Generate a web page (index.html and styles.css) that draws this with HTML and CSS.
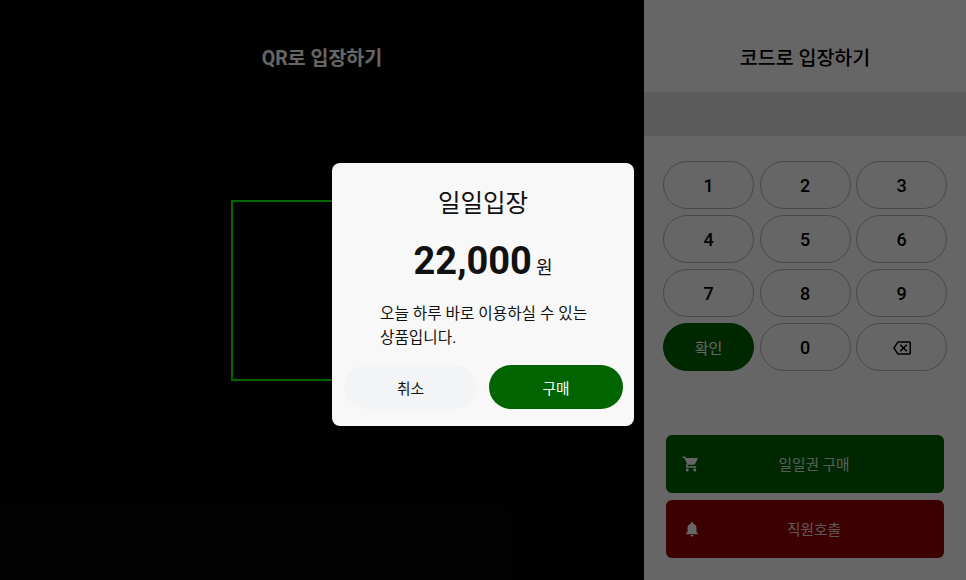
FILE: index.html
```html
<!DOCTYPE html>
<html lang="ko">
<head>
<meta charset="utf-8">
<title>입장</title>
<link rel="stylesheet" href="styles.css">
</head>
<body>
<div class="app">
  <section class="qr-panel">
    <h2 class="qr-title">QR로 입장하기</h2>
    <div class="qr-frame"></div>
  </section>
  <section class="code-panel">
    <h2 class="code-title">코드로 입장하기</h2>
    <div class="code-band"></div>
    <div class="keypad">
      <button class="key">1</button>
      <button class="key">2</button>
      <button class="key">3</button>
      <button class="key">4</button>
      <button class="key">5</button>
      <button class="key">6</button>
      <button class="key">7</button>
      <button class="key">8</button>
      <button class="key">9</button>
      <button class="key key-ok">확인</button>
      <button class="key">0</button>
      <button class="key">
        <svg class="icon-back" viewBox="0 0 24 24"><path d="M22 3H7c-.69 0-1.23.35-1.59.88L0 12l5.41 8.11c.36.53.9.89 1.59.89h15c1.1 0 2-.9 2-2V5c0-1.1-.9-2-2-2zm0 16H7.07L2.4 12l4.66-7H22v14zm-11.59-2L14 13.41 17.59 17 19 15.59 15.41 12 19 8.41 17.59 7 14 10.59 10.41 7 9 8.41 12.59 12 9 15.59z"/></svg>
      </button>
    </div>
    <div class="actions">
      <button class="action action-buy">
        <svg class="action-icon" viewBox="0 0 24 24"><path d="M7 18c-1.1 0-1.99.9-1.99 2S5.9 22 7 22s2-.9 2-2-.9-2-2-2zM1 2v2h2l3.6 7.59-1.35 2.45c-.16.28-.25.61-.25.96 0 1.1.9 2 2 2h12v-2H7.42c-.14 0-.25-.11-.25-.25l.03-.12.9-1.63h7.45c.75 0 1.41-.41 1.75-1.03l3.58-6.49c.08-.14.12-.31.12-.48 0-.55-.45-1-1-1H5.21l-.94-2H1zm16 16c-1.1 0-1.99.9-1.99 2s.89 2 1.99 2 2-.9 2-2-.9-2-2-2z"/></svg>
        <span class="action-label">일일권 구매</span>
      </button>
      <button class="action action-call">
        <svg class="action-icon icon-bell" viewBox="0 0 24 24"><path d="M12 22c1.1 0 2-.9 2-2h-4c0 1.1.89 2 2 2zm6-6v-5c0-3.07-1.64-5.64-4.5-6.32V4c0-.83-.67-1.5-1.5-1.5s-1.5.67-1.5 1.5v.68C7.63 5.36 6 7.92 6 11v5l-2 2v1h16v-1l-2-2z"/></svg>
        <span class="action-label">직원호출</span>
      </button>
    </div>
  </section>
</div>
<div class="overlay">
  <div class="modal">
    <h3 class="modal-title">일일입장</h3>
    <p class="modal-price"><strong class="price-num">22,000</strong> <span class="price-unit">원</span></p>
    <p class="modal-desc">오늘 하루 바로 이용하실 수 있는 상품입니다.</p>
    <div class="modal-buttons">
      <button class="modal-btn btn-cancel">취소</button>
      <button class="modal-btn btn-buy">구매</button>
    </div>
  </div>
</div>
</body>
</html>
```
FILE: styles.css
```css
* { box-sizing: border-box; }
html, body {
  margin: 0;
  height: 100%;
  overflow: hidden;
  font-family: Roboto, "Noto Sans CJK KR", sans-serif;
  color: #000;
}
button {
  font-family: inherit;
  margin: 0;
  padding: 0;
  cursor: pointer;
}
.app {
  display: flex;
  width: 966px;
  height: 580px;
}
.qr-panel {
  width: 644px;
  background: #040404;
  display: flex;
  flex-direction: column;
  align-items: center;
}
.qr-title {
  margin: 44px 0 0;
  height: 30px;
  font-size: 19.5px;
  line-height: 30px;
  font-weight: 700;
  color: #fff;
}
.qr-frame {
  width: 182px;
  height: 181px;
  margin-top: 126px;
  border: 2px solid #00ff00;
}
.code-panel {
  width: 322px;
  background: #fff;
  display: flex;
  flex-direction: column;
}
.code-title {
  margin: 0;
  height: 92px;
  padding-top: 44px;
  font-size: 19.5px;
  line-height: 30px;
  font-weight: 500;
  text-align: center;
}
.code-band {
  height: 44px;
  background: #e6e6e6;
}
.keypad {
  display: grid;
  grid-template-columns: repeat(3, 91px);
  grid-auto-rows: 48px;
  column-gap: 5.5px;
  row-gap: 6px;
  margin: 25px 0 0 19px;
}
.key {
  border: 1px solid #b5b5b5;
  border-radius: 24px;
  background: #fff;
  font-size: 18px;
  font-weight: 500;
  color: #000;
  display: flex;
  align-items: center;
  justify-content: center;
}
.key-ok {
  background: #006400;
  border-color: #006400;
  color: #fff;
  font-size: 15px;
  font-weight: 400;
}
.icon-back {
  width: 18px;
  height: 18px;
  margin-top: 2px;
  fill: #000;
}
.actions {
  display: flex;
  flex-direction: column;
  gap: 7px;
  margin: 64px 22px 0;
}
.action {
  height: 58px;
  border: 0;
  border-radius: 6px;
  padding: 0 16px 2px;
  display: flex;
  align-items: center;
  color: #fff;
  font-size: 14.7px;
}
.action-buy { background: #006400; }
.action-call { background: #960000; }
.action-icon {
  width: 18px;
  height: 18px;
  margin-top: 2px;
  fill: #fff;
  flex: none;
}
.icon-bell {
  margin-left: 1px;
  margin-right: -1px;
}
.action-label {
  flex: 1;
  text-align: center;
  opacity: .85;
}
.overlay {
  position: absolute;
  inset: 0;
  background: rgba(0, 0, 0, .6);
}
.modal {
  position: absolute;
  left: 332px;
  top: 163px;
  width: 302px;
  height: 263px;
  background: #f8f8f8;
  border-radius: 8px;
  display: flex;
  flex-direction: column;
  color: #111;
}
.modal-title {
  margin: 23px 0 0;
  font-size: 24.5px;
  line-height: 36px;
  font-weight: 400;
  text-align: center;
}
.modal-price {
  margin: 15px 0 0;
  height: 48px;
  line-height: 48px;
  text-align: center;
}
.price-num {
  font-size: 38px;
  font-weight: 700;
}
.price-unit {
  font-size: 18px;
}
.modal-desc {
  margin: 17px 0 0 48px;
  width: 216px;
  font-size: 15.7px;
  line-height: 24px;
}
.modal-buttons {
  display: flex;
  gap: 12px;
  margin: auto 11px 17px 12px;
}
.modal-btn {
  height: 44px;
  border: 0;
  border-radius: 22px;
  font-size: 14.7px;
}
.btn-cancel { flex: none; width: 133px; background: #f3f4f6; color: #111; }
.btn-buy { flex: 1; background: #006400; color: #fff; }
```
